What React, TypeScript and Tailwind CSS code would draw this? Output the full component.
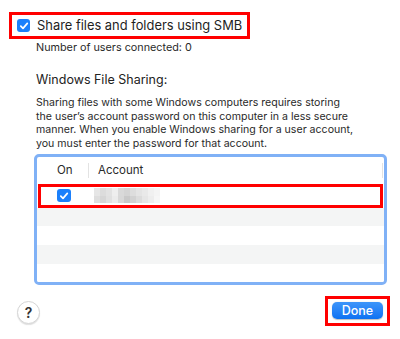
import React from "react";

function Check({ className }: { className?: string }) {
  return (
    <div className={"flex items-center justify-center rounded-[3px] bg-[#1b80fb] " + (className ?? "")}>
      <svg width="10" height="10" viewBox="0 0 10 10" fill="none">
        <path d="M1.8 5.2 L4 7.4 L8.3 2.4" stroke="white" strokeWidth="1.7" strokeLinecap="round" strokeLinejoin="round" />
      </svg>
    </div>
  );
}

const blurTop = ["#e6e6e6", "#dcdcdc", "#e2e2e2", "#eeeeee", "#d9d9d9", "#d4d4d4", "#dddddd", "#e4e4e4", "#e9e9e9", "#f0f0f0", "#f4f4f4"];
const blurBot = ["#dedede", "#d6d6d6", "#e0e0e0", "#ebebeb", "#d8d8d8", "#c9c9c9", "#d2d2d2", "#dcdcdc", "#e6e6e6", "#ededed", "#f6f6f6"];

export default function App() {
  return (
    <div
      className="w-[400px] h-[339px] bg-white flex flex-col text-[#262626] overflow-hidden"
      style={{ fontFamily: "Inter, 'Liberation Sans', sans-serif" }}
    >
      <div className="ml-[9px] mt-[12px] w-[241px] h-[27px] border-[3px] border-[#f00] flex items-center pl-[5px]">
        <Check className="w-[13px] h-[13px] shrink-0" />
        <span className="ml-[7px] text-[12.9px] leading-[16px] text-[#1f1f1f] whitespace-nowrap">
          Share files and folders using SMB
        </span>
      </div>
      <div className="ml-[36px] mt-[2px] text-[10.8px] leading-[14px] text-[#2a2a2a]">Number of users connected: 0</div>
      <div className="ml-[36px] mt-[17px] text-[12.5px] leading-[16px] text-[#222]">Windows File Sharing:</div>
      <div className="ml-[36px] mt-[8px] w-[340px] text-[10.6px] leading-[13.7px] text-[#2a2a2a]">
        Sharing files with some Windows computers requires storing
        <br />
        the user’s account password on this computer in a less secure
        <br />
        manner. When you enable Windows sharing for a user account,
        <br />
        you must enter the password for that account.
      </div>
      <div className="ml-[34px] mt-[3px] w-[353px] h-[131px] border-[3px] border-[#80b1f6] rounded-[5px] flex flex-col overflow-hidden">
        <div className="h-[27px] flex items-center text-[11.5px] text-[#2a2a2a] shrink-0">
          <span className="ml-[20px] w-[31px]">On</span>
          <div className="w-px h-[15px] bg-[#e3e3e3]" />
          <span className="ml-[9px] flex-1">Account</span>
          <div className="w-px h-[15px] bg-[#e3e3e3] mr-[1px]" />
        </div>
        <div className="h-[24px] mx-[1px] border-[3px] border-[#f00] flex items-center shrink-0">
          <Check className="ml-[16px] w-[14px] h-[13px]" />
          <div className="ml-[23px] flex flex-col">
            <div className="flex">
              {blurTop.map((c, i) => (
                <div key={i} className="w-[6px] h-[8px]" style={{ background: c }} />
              ))}
            </div>
            <div className="flex">
              {blurBot.map((c, i) => (
                <div key={i} className="w-[6px] h-[7px]" style={{ background: c }} />
              ))}
            </div>
          </div>
        </div>
        <div className="h-[18px] bg-[#f4f5f5] shrink-0" />
        <div className="h-[19px] bg-white shrink-0" />
        <div className="h-[19px] bg-[#f4f5f5] shrink-0" />
        <div className="flex-1 bg-white" />
      </div>
      <div className="mt-[11px] flex items-center justify-between pl-[17px] pr-[10px]">
        <div className="mt-[4px] w-[23px] h-[23px] rounded-full bg-white border border-[#d6d6d6] shadow-[0_1px_1px_rgba(0,0,0,0.12)] flex items-center justify-center text-[14px] font-semibold text-[#333]">
          ?
        </div>
        <div className="w-[65px] h-[30px] border-[3px] border-[#f00] flex items-center justify-center">
          <div className="w-[51px] h-[17px] rounded-[5px] bg-gradient-to-b from-[#3d95fa] to-[#0b72f2] text-white text-[12.5px] font-medium leading-[17px] text-center shadow-[0_0.5px_1px_rgba(0,0,0,0.25)]">
            Done
          </div>
        </div>
      </div>
    </div>
  );
}
